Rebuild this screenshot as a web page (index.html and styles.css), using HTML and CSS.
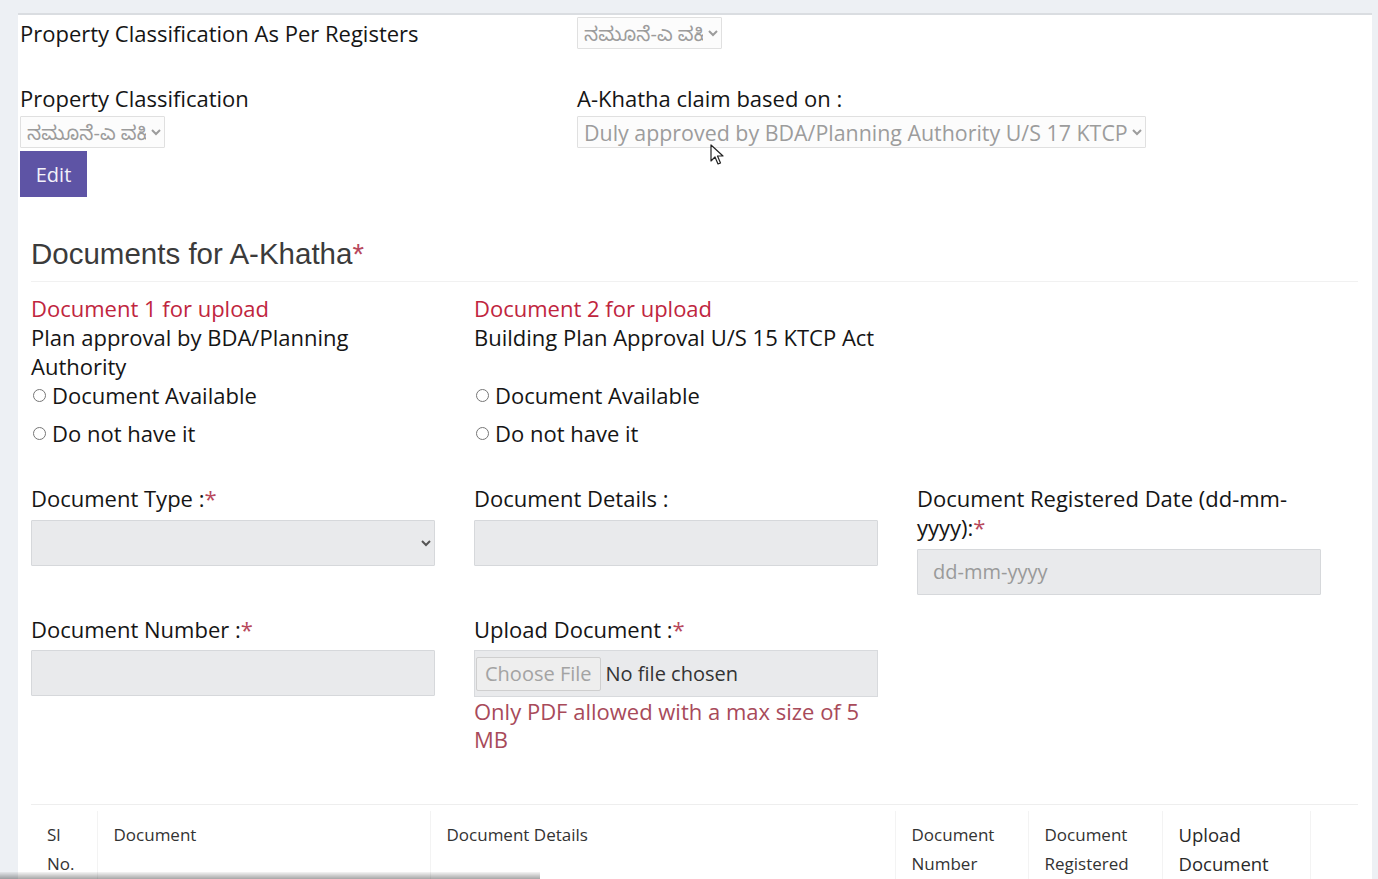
FILE: index.html
```html
<!DOCTYPE html>
<html lang="en">
<head>
    <meta charset="UTF-8">
    <meta name="viewport" content="width=device-width, initial-scale=1.0">
    <title>A-Khatha Documents</title>
    <link rel="stylesheet" href="styles.css">
</head>
<body>
    <div class="panel">
        <div class="top-row">
            <div class="field-label first">Property Classification As Per Registers</div>
            <div>
                <select class="mini-select" disabled>
                    <option>ನಮೂನೆ-ಎ ವಹಿ</option>
                </select>
            </div>
        </div>

        <div class="top-row second">
            <div>
                <div class="field-label">Property Classification</div>
                <select class="mini-select" disabled>
                    <option>ನಮೂನೆ-ಎ ವಹಿ</option>
                </select>
                <button class="btn-edit" type="button">Edit</button>
            </div>
            <div>
                <div class="field-label">A-Khatha claim based on :</div>
                <select class="wide-select" disabled>
                    <option>Duly approved by BDA/Planning Authority U/S 17 KTCP</option>
                </select>
            </div>
        </div>

        <div class="docs">
            <h3 class="docs-title">Documents for A-Khatha<span class="req">*</span></h3>
            <hr>

            <div class="doc-grid">
                <div class="doc-choice">
                    <div class="doc-name">Document 1 for upload</div>
                    <div class="doc-desc">Plan approval by BDA/Planning Authority</div>
                    <label class="radio-line"><input type="radio" name="doc1">Document Available</label>
                    <label class="radio-line"><input type="radio" name="doc1">Do not have it</label>
                </div>
                <div class="doc-choice">
                    <div class="doc-name">Document 2 for upload</div>
                    <div class="doc-desc">Building Plan Approval U/S 15 KTCP Act</div>
                    <label class="radio-line"><input type="radio" name="doc2">Document Available</label>
                    <label class="radio-line"><input type="radio" name="doc2">Do not have it</label>
                </div>
            </div>

            <div class="form-grid">
                <div class="form-field">
                    <div class="field-label">Document Type :<span class="req">*</span></div>
                    <select class="form-control"><option></option></select>
                </div>
                <div class="form-field">
                    <div class="field-label">Document Details :</div>
                    <input class="form-control" type="text">
                </div>
                <div class="form-field">
                    <div class="field-label">Document Registered Date (dd-mm-yyyy):<span class="req">*</span></div>
                    <input class="form-control date-input" type="text" placeholder="dd-mm-yyyy">
                </div>
                <div class="form-field">
                    <div class="field-label">Document Number :<span class="req">*</span></div>
                    <input class="form-control" type="text">
                </div>
                <div class="form-field">
                    <div class="field-label">Upload Document :<span class="req">*</span></div>
                    <div class="file-box">
                        <span class="file-btn">Choose File</span>
                        <span class="file-name">No file chosen</span>
                    </div>
                    <div class="file-note">Only PDF allowed with a max size of 5 MB</div>
                </div>
            </div>

            <div class="table-wrap">
                <table class="doc-table">
                    <thead>
                        <tr>
                            <th class="c-sl">Sl No.</th>
                            <th class="c-doc">Document</th>
                            <th class="c-details">Document Details</th>
                            <th class="c-num">Document Number</th>
                            <th class="c-date">Document Registered Date</th>
                            <th class="c-upload">Upload Document</th>
                            <th class="c-action"></th>
                        </tr>
                    </thead>
                </table>
            </div>
        </div>
    </div>

    <!-- mouse pointer seen in the capture -->
    <svg class="cursor" width="14" height="22" viewBox="0 0 14 22">
        <path d="M1 1 L1 17 L5 13 L8 20 L10.5 19 L7.5 12 L13 12 Z" fill="#fff" stroke="#222" stroke-width="1.2" stroke-linejoin="round"/>
    </svg>
    <div class="bottom-shade"></div>
</body>
</html>
```

FILE: styles.css
```css
* {
    box-sizing: border-box;
}

body {
    margin: 0;
    font-family: 'Open Sans', 'Noto Sans', 'Noto Sans Kannada', sans-serif;
    font-size: 22px;
    line-height: 29px;
    color: #151515;
    background: #edf0f4;
    overflow: hidden;
}

.panel {
    margin: 13px 6px 0 18px;
    border-top: 2px solid #dadde1;
    background: #fff;
    min-height: 900px;
}

.req {
    color: #b8485c;
}

/* top classification block */
.top-row {
    display: grid;
    grid-template-columns: 557px auto;
    padding: 2px 0 0 2px;
}

.top-row.second {
    margin-top: 33px;
}

.field-label.first {
    margin-top: 2px;
}

.mini-select,
.wide-select {
    display: block;
    height: 32px;
    font-family: 'Open Sans', 'Noto Sans Kannada', 'Noto Sans', sans-serif;
    font-size: 20px;
    color: #9c9c9c;
    background: #fcfcfc;
    border: 1px solid #e0e0e0;
    border-radius: 1px;
    padding: 0 2px;
    opacity: 1;
}

.mini-select {
    width: 145px;
}

.top-row.second .mini-select,
.top-row.second .wide-select {
    margin-top: 3px;
}

.wide-select {
    width: 569px;
    font-size: 21.4px;
}

.btn-edit {
    display: block;
    margin-top: 3px;
    width: 67px;
    height: 46px;
    border: none;
    background: #5e54a5;
    color: #f3f2fa;
    font-family: 'Open Sans', sans-serif;
    font-size: 20px;
    padding: 0;
}

/* documents section */
.docs {
    padding-left: 13px;
    padding-right: 14px;
}

.docs-title {
    margin: 40px 0 0;
    font-family: 'Liberation Sans', Arial, sans-serif;
    font-weight: normal;
    font-size: 29.5px;
    line-height: 34px;
    color: #3b3b3b;
}

.docs hr {
    margin: 10px 0 12px;
    border: 0;
    border-top: 1px solid #f1f1f1;
}

.doc-grid {
    display: grid;
    grid-template-columns: 404px 404px;
    column-gap: 39px;
}

.doc-name {
    color: #c0253e;
}

.doc-desc {
    min-height: 58px;
}

.radio-line {
    display: flex;
    align-items: center;
}

.radio-line + .radio-line {
    margin-top: 9px;
}

.radio-line input {
    width: 13px;
    height: 13px;
    margin: 0 6px 0 2px;
}

.form-grid {
    display: grid;
    grid-template-columns: 404px 404px 404px;
    column-gap: 39px;
    row-gap: 20px;
    align-items: start;
    margin-top: 36px;
}

.form-control {
    display: block;
    width: 100%;
    height: 46px;
    margin-top: 6.5px;
    background: #e9eaec;
    border: 1px solid #d6d8db;
    border-radius: 1px;
    font-family: 'Open Sans', sans-serif;
    font-size: 20px;
    padding: 0 15px;
    color: #555;
}

.date-input::placeholder {
    color: #9a9a9a;
}

.file-box {
    display: flex;
    align-items: center;
    height: 47px;
    margin-top: 6.5px;
    background: #e9eaec;
    border: 1px solid #d8dadd;
}

.file-btn {
    display: inline-block;
    margin-left: 1px;
    height: 34px;
    line-height: 32px;
    padding: 0 8px;
    background: #eeeeee;
    border: 1px solid #cfcfcf;
    border-radius: 2px;
    color: #a3a3a3;
    font-size: 20px;
}

.file-name {
    margin-left: 5px;
    color: #333;
    font-size: 20px;
}

.file-note {
    color: #a84a5a;
    line-height: 28px;
}

/* documents table */
.table-wrap {
    margin-top: 51px;
    border-top: 1px solid #eeeeee;
    padding-top: 6px;
}

.doc-table {
    border-collapse: collapse;
    width: 1327px;
    table-layout: fixed;
}

.doc-table th {
    text-align: left;
    vertical-align: top;
    font-weight: normal;
    font-size: 17px;
    line-height: 29px;
    color: #333;
    padding: 9px 14px 40px 16px;
    border-right: 1px solid #f3f3f3;
}

.doc-table th.c-upload {
    font-size: 18.5px;
    color: #2a2a2a;
}

.c-sl { width: 66px; }
.c-doc { width: 333px; }
.c-details { width: 465px; }
.c-num { width: 133px; }
.c-date { width: 134px; }
.c-upload { width: 148px; }
.c-action { width: 48px; }

.doc-table th.c-action {
    border-right: none;
}

/* screen capture overlays */
.cursor {
    position: absolute;
    left: 710px;
    top: 144px;
}

.bottom-shade {
    position: fixed;
    left: 0;
    bottom: 0;
    width: 540px;
    height: 7px;
    background: linear-gradient(to bottom, rgba(0, 0, 0, 0.04), rgba(0, 0, 0, 0.35));
}
```
